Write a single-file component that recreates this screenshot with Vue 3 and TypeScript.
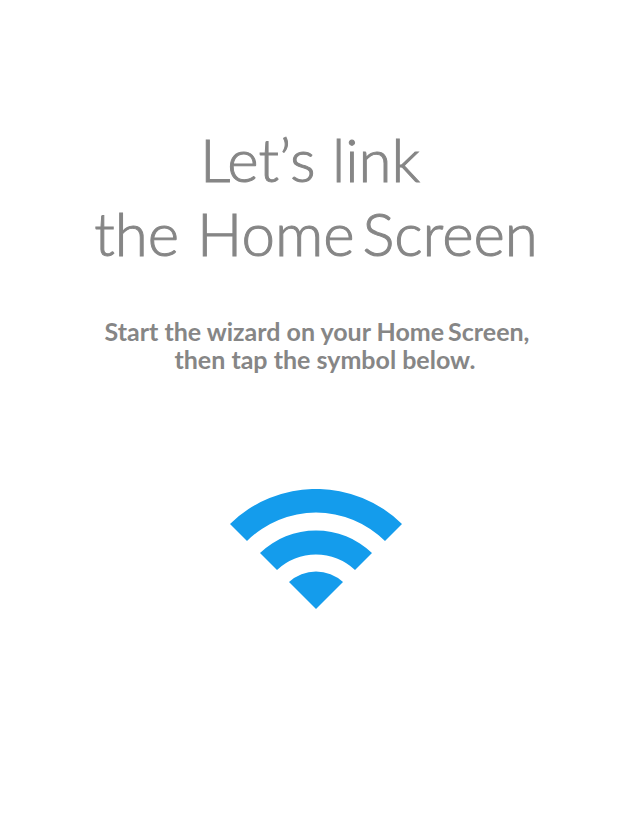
<script setup lang="ts">
const titleStart: string = 'Let’s link'
</script>

<template>
  <main class="page">
    <h1 class="title">
      <span class="first">{{ titleStart }}</span>
      <span class="words"><span>the</span><span class="brand"><span>Home</span><span>Screen</span></span></span>
    </h1>
    <p class="hint">
      <span class="words"><span>Start the wizard on your Home</span><span>Screen,</span></span>
      <span class="second">then tap the symbol below.</span>
    </p>
    <button class="link" type="button" aria-label="Link">
      <svg viewBox="0 0 172 120" aria-hidden="true">
        <path d="M0 35A123 123 0 0 1 172 35L155 52A98 98 0 0 0 17 52Z" />
        <path d="M30 64A81 81 0 0 1 142 64L125 81A57 57 0 0 0 47 81Z" />
        <path d="M59 93A40 40 0 0 1 113 93L86 120Z" />
      </svg>
    </button>
  </main>
</template>

<style>
body { margin: 0; background: #fff; }
</style>

<style scoped>
.page { display: flex; flex-direction: column; align-items: center; min-height: 100vh; box-sizing: border-box; padding: 122px 20px 32px 16px; color: #868686; font-family: Lato, sans-serif; }
.title { display: flex; flex-direction: column; align-items: center; margin: 0; font-size: 60px; line-height: 74px; font-weight: 300; -webkit-text-stroke: 1px #868686; }
.first { padding-right: 12px; }
.words { display: flex; gap: 4px; }
.title .words { gap: 18px; }
.brand { display: flex; gap: 8px; }
.hint { display: flex; flex-direction: column; align-items: center; margin: 47px 0 0 2px; font-size: 25px; line-height: 28px; font-weight: 700; }
.second { padding-left: 16px; }
.link { margin: 116px 0 0; padding: 0; border: 0; background: none; cursor: pointer; }
.link svg { display: block; width: 172px; height: 120px; fill: #149cec; }
</style>
